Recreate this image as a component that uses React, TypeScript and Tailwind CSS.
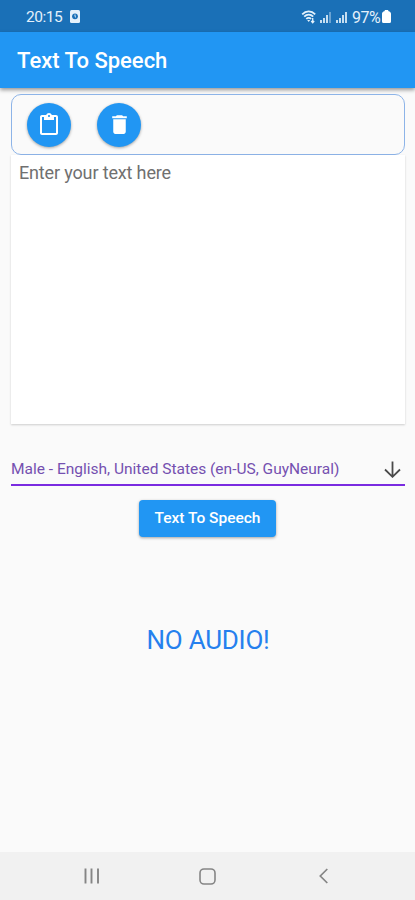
import React, { useState } from "react";
import { MdContentPaste, MdDelete } from "react-icons/md";

const StatusBar: React.FC = () => (
  <div className="flex h-8 items-center justify-between bg-[#1a70b7] pl-[26px] pr-[24px] pt-[2px] text-[#e4f1fb]">
    <div className="flex items-center gap-[8px]">
      <span className="relative top-[1px] text-[15.5px] leading-none tracking-[-0.45px]">
        20:15
      </span>
      <svg className="relative -top-px" width="10" height="13" viewBox="0 0 10 13">
        <rect width="10" height="13" rx="1.5" fill="currentColor" />
        <circle cx="5" cy="6.3" r="2.9" fill="#1a70b7" />
        <path d="M5 4.5v2l1 .8" stroke="#e4f1fb" strokeWidth="1" fill="none" />
      </svg>
    </div>

    <div className="flex items-center">
      <svg width="16" height="14" viewBox="0 0 16 14" fill="none" stroke="currentColor">
        <path d="M1.2 4.3C5 .4 10.4 .4 14.2 4.3" strokeWidth="1.8" />
        <path d="M3.2 6.7c2.6-2.6 6.4-2.6 9 0" strokeWidth="1.8" />
        <path d="M5.3 9c1.4-1.5 3.4-1.5 4.8 0" strokeWidth="1.8" />
        <path d="M6.2 10.1h3l-1.5 1.9z" fill="currentColor" stroke="none" />
        <path d="M11.7 8v4.5M10.2 11l1.5 1.7L13.2 11" strokeWidth="1.3" />
      </svg>
      <SignalBars className="ml-[3px]" strength={3} />
      <SignalBars className="ml-[4px]" strength={4} />
      <span className="relative top-[1px] ml-[4px] text-[16px] leading-none tracking-[-0.6px]">
        97%
      </span>
      <svg
        className="relative -top-px ml-[2px]"
        width="9"
        height="13"
        viewBox="0 0 9 13"
        fill="#ffffff"
      >
        <path d="M3 0h3l.6 1.3C8 1.600 9 2.500 9 3.800v7.700A1.500 1.500 0 0 1 7.500 13h-6A1.500 1.500 0 0 1 0 11.500V3.800c0-1.300 1-2.200 2.400-2.500z" />
      </svg>
    </div>
  </div>
);

interface SignalBarsProps {
  className?: string;
  strength: number;
}

const SignalBars: React.FC<SignalBarsProps> = ({ className, strength }) => (
  <svg className={className} width="12" height="12" viewBox="0 0 12 12" fill="currentColor">
    {[3, 5, 8, 11].map((h, i) => (
      <rect
        key={h}
        x={i * 3}
        y={12 - h}
        width="2"
        height={h}
        opacity={i < strength ? 0.85 : 0.4}
      />
    ))}
  </svg>
);

interface RoundButtonProps {
  label: string;
  onClick: () => void;
  children: React.ReactNode;
}

const RoundButton: React.FC<RoundButtonProps> = ({ label, onClick, children }) => (
  <button
    aria-label={label}
    onClick={onClick}
    className="flex size-11 items-center justify-center rounded-full bg-[#2196f3] text-white shadow-[0_1px_3px_rgba(0,0,0,0.35)]"
  >
    {children}
  </button>
);

const NavBar: React.FC = () => (
  <div className="flex h-12 items-center bg-[#f1f1f1] pl-[83px] text-[#858585]">
    <svg width="16" height="16" viewBox="0 0 16 16" stroke="currentColor" strokeWidth="1.9">
      <path d="M2.500 .5v15M8.500 .5v15M15 .5v15" />
    </svg>
    <svg className="ml-[100px]" width="17" height="17" viewBox="0 0 17 17" fill="none" stroke="currentColor" strokeWidth="1.6">
      <rect x="1" y="1" width="15" height="15" rx="4" />
    </svg>
    <svg className="ml-[103px]" width="9" height="16" viewBox="0 0 9 16" fill="none" stroke="currentColor" strokeWidth="1.7">
      <path d="M8.300 1 1.300 8l7 7" />
    </svg>
  </div>
);

const App: React.FC = () => {
  const [text, setText] = useState("");

  const pasteText = async () => {
    setText(await navigator.clipboard.readText());
  };

  return (
    <div className="flex h-[900px] w-[415px] flex-col bg-[#fafafa] font-[Roboto,sans-serif]">
      <StatusBar />
      <header className="flex h-14 items-center bg-[#2196f3] pl-[17px] shadow-[0_2px_4px_rgba(0,0,0,0.4)]">
        <h1 className="text-[22px] font-medium text-white">Text To Speech</h1>
      </header>

      <main className="flex flex-1 flex-col items-center pl-[11px] pr-[10px] pt-[6px]">
        <div className="flex h-[61px] w-full items-center gap-[26px] rounded-[10px] border border-[#8db4e8] pl-[15px]">
          <RoundButton label="Paste" onClick={pasteText}>
            <MdContentPaste size={24} />
          </RoundButton>
          <RoundButton label="Delete" onClick={() => setText("")}>
            <MdDelete size={25} />
          </RoundButton>
        </div>

        <textarea
          value={text}
          onChange={(e) => setText(e.target.value)}
          placeholder="Enter your text here"
          className="block h-[269px] w-full resize-none bg-white px-2 pt-[5px] text-[18px] leading-[26px] tracking-[-0.15px] text-[#333333] shadow-[0_1px_2px_rgba(0,0,0,0.18)] outline-none placeholder:text-[#707070]"
        />

        <button className="mt-[30px] flex h-[32px] w-full items-center justify-between border-b-2 border-[#7a2be0] pr-[4px] text-left text-[15.5px] text-[#7550b0]">
          <span className="pt-[2px]">Male - English, United States (en-US, GuyNeural)</span>
          <svg width="17" height="17" viewBox="0 0 17 17" fill="none" stroke="#4a4a4a" strokeWidth="1.8">
            <path d="M8.500 .5v15M1 8.500l7.500 7.300L16 8.500" />
          </svg>
        </button>

        <button className="mr-[1px] mt-[14px] h-[37px] w-[137px] rounded-[4px] bg-[#2196f3] text-[15.5px] font-medium text-white shadow-[0_1px_3px_rgba(0,0,0,0.35)]">
          Text To Speech
        </button>

        <p className="mt-[85px] text-[26px] leading-9 tracking-[-0.25px] text-[#2580ee]">NO AUDIO!</p>
      </main>

      <NavBar />
    </div>
  );
};

export default App;
